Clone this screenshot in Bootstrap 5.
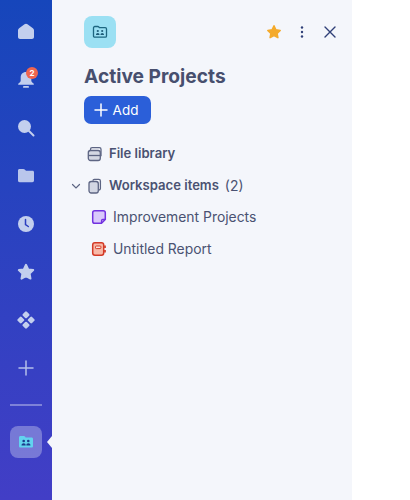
<!DOCTYPE html>
<html lang="en">
<head>
    <meta charset="UTF-8">
    <title>Active Projects</title>
    <link href="https://cdn.jsdelivr.net/npm/bootstrap@5.3.0/dist/css/bootstrap.min.css" rel="stylesheet">
    <style>
        body { background: #fff; font-family: "Inter", "Liberation Sans", sans-serif; color: #4a5272; }
        .app-shell { width: 352px; height: 500px; }
        .side-rail { width: 52px; background: linear-gradient(180deg, #1646bb 0%, #423ec6 100%); padding-top: 16px; }
        .rail-btn { width: 52px; height: 32px; margin-bottom: 16px; }
        .rail-btn svg { width: 18px; height: 18px; }
        .rail-line { width: 32px; height: 2px; background: rgba(255,255,255,.35); margin: 4px 0 20px; }
        .rail-active { width: 32px; height: 32px; border-radius: 8px; background: rgba(255,255,255,.3); }
        .rail-arrow { position: absolute; right: -10px; top: 10px; width: 0; height: 0; border-top: 6px solid transparent; border-bottom: 6px solid transparent; border-right: 5px solid #f4f6fb; }
        .bell-count { position: absolute; left: 26px; top: 3px; width: 12px; height: 12px; border-radius: 50%; background: #f0654f; color: #fff; font-size: 8px; line-height: 12px; text-align: center; font-weight: 700; }
        .side-panel { width: 300px; background: #f4f6fb; padding: 16px 14px 0 16px; }
        .space-tile { width: 32px; height: 32px; margin-left: 16px; border-radius: 8px; background: #9be0f3; }
        .panel-title { font-size: 19.2px; font-weight: 700; color: #474f6e; margin: 16px 0 8px 16px; line-height: 24px; }
        .add-btn { margin-left: 16px; width: 67px; height: 28px; background: #2b5fd9; color: #fff; font-size: 13.5px; font-weight: 400; border-radius: 7px; border: 0; padding: 0 3px 0 0; gap: 5px; }
        .add-btn:hover { background: #2b5fd9; color: #fff; }
        .tree-list { margin-top: 14px; }
        .tree-row { height: 32px; font-size: 13.9px; color: #4a5272; gap: 6px; }
        .tree-row b { font-weight: 600; font-size: 13.1px; }
        .tree-top { padding-left: 19px; }
        .tree-sub { padding-left: 23px; padding-bottom: 2px; }
        .tree-ic { width: 16px; height: 16px; flex: none; }
        .tree-caret { width: 10px; height: 10px; position: absolute; left: 3px; top: 11px; }
    </style>
</head>
<body class="m-0">
    <div class="app-shell d-flex">
        <!-- left rail -->
        <nav class="side-rail d-flex flex-column align-items-center">
            <div class="rail-btn d-flex align-items-center justify-content-center">
                <svg viewBox="0 0 18 18" fill="#c3cfee"><path d="M9 .8c.6 0 1.100.2 1.500.5l5.400 3.900c.7.500 1.100 1.200 1.100 2.100v6.700c0 1.200-.9 2-2 2H3c-1.100 0-2-.8-2-2V7.300c0-.9.400-1.600 1.100-2.100l5.400-3.900C7.900 1 8.400.8 9 .8z"/></svg>
            </div>
            <div class="rail-btn d-flex align-items-center justify-content-center position-relative">
                <svg viewBox="0 0 18 18" fill="#c3cfee"><path d="M9 1c3.300 0 5.300 2.400 5.300 5.300v3.200c0 1.400 1.200 2.100 2.500 3.300v.9H1.200v-.9c1.300-1.200 2.500-1.900 2.500-3.300V6.300C3.700 3.400 5.700 1 9 1z"/><rect x="6" y="15" width="6" height="1.800" rx=".9"/></svg>
                <span class="bell-count">2</span>
            </div>
            <div class="rail-btn d-flex align-items-center justify-content-center">
                <svg viewBox="0 0 18 18" fill="#c3cfee"><circle cx="7.500" cy="7.500" r="6.500"/><path d="M12 12l4.500 4.500" stroke="#c3cfee" stroke-width="2" stroke-linecap="round"/></svg>
            </div>
            <div class="rail-btn d-flex align-items-center justify-content-center">
                <svg viewBox="0 0 18 18" fill="#b9c6ec"><path d="M2.500 2h3.800c.6 0 1 .2 1.400.6L9 3.800h6.500c1 0 1.500.6 1.500 1.500v8.200c0 1.100-.7 1.700-1.700 1.700H2.700C1.700 15.200 1 14.600 1 13.500v-10C1 2.600 1.600 2 2.500 2z"/></svg>
            </div>
            <div class="rail-btn d-flex align-items-center justify-content-center">
                <svg viewBox="0 0 18 18"><circle cx="9" cy="9" r="8" fill="#c3cfee"/><path d="M8.500 4.500v5l2.800 2" fill="none" stroke="#2c3fc0" stroke-width="1.500" stroke-linecap="round"/></svg>
            </div>
            <div class="rail-btn d-flex align-items-center justify-content-center">
                <svg viewBox="0 0 18 18" fill="#c3cfee" stroke="#c3cfee" stroke-width="2" stroke-linejoin="round"><path d="M9 1.800l2.200 4.600 5 .7-3.600 3.500.9 5L9 13.200l-4.500 2.400.9-5L1.800 7.100l5-.7z"/></svg>
            </div>
            <div class="rail-btn d-flex align-items-center justify-content-center">
                <svg viewBox="0 0 18 18" fill="#c3cfee"><rect x="6.200" y="1" width="5.600" height="5.600" rx="1.200" transform="rotate(45 9 3.800)"/><rect x="6.200" y="11.400" width="5.600" height="5.600" rx="1.200" transform="rotate(45 9 14.200)"/><rect x="1" y="6.200" width="5.600" height="5.600" rx="1.200" transform="rotate(45 3.800 9)"/><rect x="11.400" y="6.200" width="5.600" height="5.600" rx="1.200" transform="rotate(45 14.200 9)"/></svg>
            </div>
            <div class="rail-btn d-flex align-items-center justify-content-center">
                <svg viewBox="0 0 18 18"><path d="M9 2v14M2 9h14" stroke="#b4bfea" stroke-width="1.500" stroke-linecap="round"/></svg>
            </div>
            <div class="rail-line"></div>
            <div class="rail-active d-flex align-items-center justify-content-center position-relative">
                <svg width="16" height="16" viewBox="0 0 16 16"><path d="M1 3.500C1 2.700 1.600 2 2.500 2h3.300c.5 0 .9.200 1.200.6l.6.800h6c.8 0 1.400.6 1.400 1.400v7.400c0 .8-.6 1.400-1.400 1.400H2.400C1.600 13.600 1 13 1 12.200z" fill="#62d3ef"/><g fill="#1c3c8c"><circle cx="5.700" cy="7" r="1.300"/><circle cx="10.300" cy="7" r="1.300"/><path d="M3.500 11.500c0-1.500 1-2.300 2.200-2.300s2 .8 2 2.300zM8.300 11.500c0-1.500 .8-2.300 2-2.300s2.200.8 2.200 2.300z"/></g></svg>
                <span class="rail-arrow"></span>
            </div>
        </nav>
        <!-- project panel -->
        <main class="side-panel">
            <div class="d-flex align-items-center">
                <div class="space-tile d-flex align-items-center justify-content-center me-auto">
                    <svg width="16" height="16" viewBox="0 0 16 16"><path d="M1.500 3.800c0-.8.600-1.300 1.300-1.300h3c.4 0 .8.200 1 .5l.6.700h5.800c.8 0 1.300.6 1.300 1.300v6.900c0 .8-.6 1.300-1.300 1.300H2.800c-.8 0-1.300-.6-1.300-1.300z" fill="none" stroke="#1d6680" stroke-width="1.300"/><g fill="#1d5c78"><circle cx="5.800" cy="7" r="1.100"/><circle cx="10.200" cy="7" r="1.100"/><path d="M4 11c0-1.200.7-1.900 1.800-1.900s1.700.7 1.700 1.900zM8.500 11c0-1.200.7-1.900 1.700-1.900s1.800.7 1.800 1.900z"/></g></svg>
                </div>
                <div class="d-flex align-items-center gap-2 top-actions">
                    <svg width="16" height="16" viewBox="0 0 16 16" fill="#f4aa2b" stroke="#f4aa2b" stroke-width="1.500" stroke-linejoin="round"><path d="M8 1.800l1.900 4 4.300.6-3.100 3 .8 4.300L8 11.600l-3.900 2.100.8-4.300-3.100-3 4.300-.6z"/></svg>
                    <svg class="ms-1" width="16" height="16" viewBox="0 0 16 16" fill="#2f3f77"><circle cx="8" cy="3.500" r="1.200"/><circle cx="8" cy="8" r="1.200"/><circle cx="8" cy="12.500" r="1.200"/></svg>
                    <svg class="ms-1" width="16" height="16" viewBox="0 0 16 16"><path d="M3 3l10 10M13 3L3 13" stroke="#2f3f77" stroke-width="1.400" stroke-linecap="round"/></svg>
                </div>
            </div>
            <h1 class="panel-title">Active Projects</h1>
            <button class="add-btn btn d-flex align-items-center justify-content-center">
                <svg width="14" height="14" viewBox="0 0 14 14"><path d="M7 1v12M1 7h12" stroke="#fff" stroke-width="1.500" stroke-linecap="round"/></svg>Add
            </button>
            <div class="tree-list">
                <div class="tree-row tree-top d-flex align-items-center position-relative">
                    <svg class="tree-ic" viewBox="0 0 16 16" fill="none" stroke="#5d6583" stroke-width="1.300"><path d="M3.500 4.500V3.300c0-.9.700-1.600 1.600-1.600h7.300c.9 0 1.600.7 1.600 1.600v7"/><rect x="1.300" y="4.500" width="12" height="10" rx="2.200" fill="#d3d7e3"/><path d="M1.300 9.500h12"/></svg>
                    <b>File library</b>
                </div>
                <div class="tree-row tree-top d-flex align-items-center position-relative">
                    <svg class="tree-caret" viewBox="0 0 10 10"><path d="M1.500 3.500L5 7l3.500-3.500" fill="none" stroke="#5d6583" stroke-width="1.200" stroke-linecap="round"/></svg>
                    <svg class="tree-ic" viewBox="0 0 16 16" fill="none" stroke="#5d6583" stroke-width="1.300"><path d="M6 2.800C6 2 6.600 1.300 7.400 1.300h4.400c.9 0 1.600.7 1.600 1.600v7.700c0 .8-.6 1.400-1.400 1.400"/><rect x="2" y="3.500" width="9.300" height="11.500" rx="2.200" fill="#d3d7e3"/></svg>
                    <b>Workspace items</b><span>(2)</span>
                </div>
                <div class="tree-row tree-sub d-flex align-items-center">
                    <svg class="tree-ic" viewBox="0 0 16 16"><path d="M3.800 1.700h8.400c1.200 0 2.100.9 2.100 2.100v6.700l-3.800 3.800H3.800c-1.200 0-2.100-.9-2.100-2.100V3.800c0-1.200.9-2.100 2.100-2.100z" fill="#d9c9fb" stroke="#7232e0" stroke-width="1.500"/><path d="M14 10.500h-2.200c-.8 0-1.300.5-1.300 1.300V14" fill="none" stroke="#7232e0" stroke-width="1.300"/></svg>
                    <span>Improvement Projects</span>
                </div>
                <div class="tree-row tree-sub d-flex align-items-center">
                    <svg class="tree-ic" viewBox="0 0 16 16"><rect x="1.700" y="1.700" width="11" height="12.600" rx="2.200" fill="#f8b9a8" stroke="#d33a26" stroke-width="1.500"/><rect x="4.500" y="5" width="5.400" height="2.600" rx=".8" fill="#fbe3dc" stroke="#d33a26" stroke-width="1"/><path d="M14 4.500v2.500M14 9v2.500" stroke="#d33a26" stroke-width="1.700"/></svg>
                    <span>Untitled Report</span>
                </div>
            </div>
        </main>
    </div>
    <script src="https://cdn.jsdelivr.net/npm/bootstrap@5.3.0/dist/js/bootstrap.bundle.min.js"></script>
</body>
</html>
